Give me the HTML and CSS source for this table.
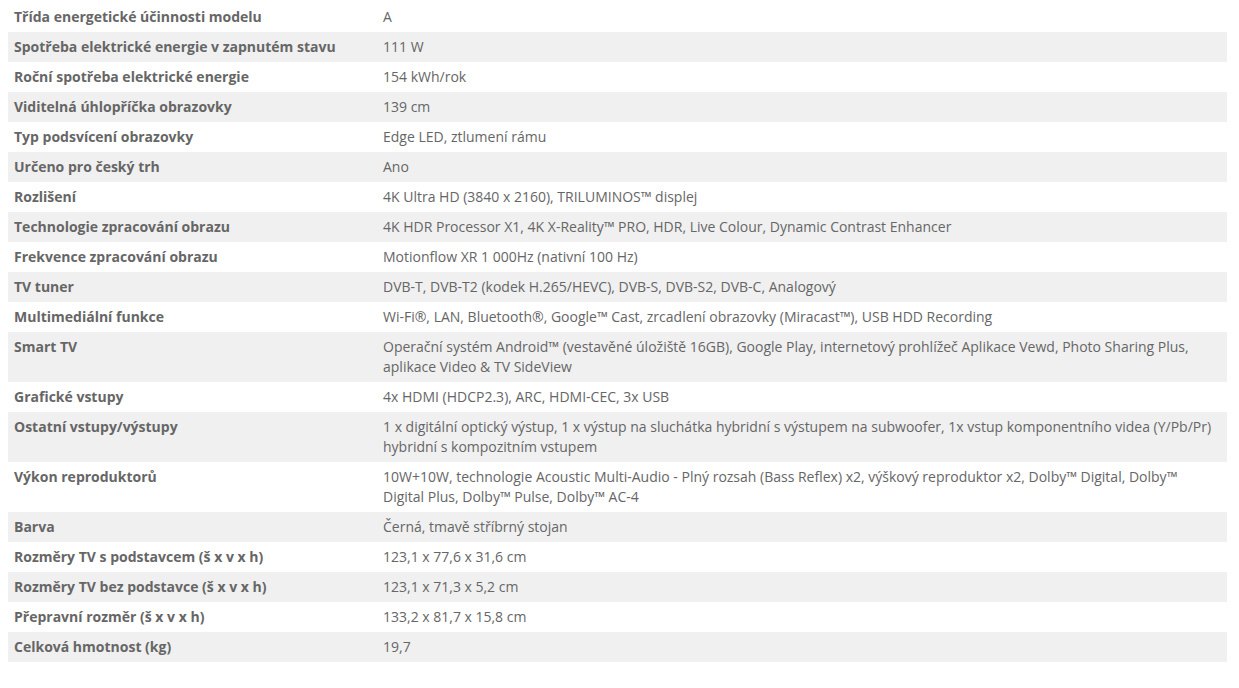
FILE: index.html
```html
<!DOCTYPE html>
<html lang="cs">
<head>
<meta charset="utf-8">
<title>Parametry</title>
<link rel="stylesheet" href="styles.css">
</head>
<body>
<table class="specs">
<tbody>
<tr><th>Třída energetické účinnosti modelu</th><td>A</td></tr>
<tr><th>Spotřeba elektrické energie v zapnutém stavu</th><td>111 W</td></tr>
<tr><th>Roční spotřeba elektrické energie</th><td>154 kWh/rok</td></tr>
<tr><th>Viditelná úhlopříčka obrazovky</th><td>139 cm</td></tr>
<tr><th>Typ podsvícení obrazovky</th><td>Edge LED, ztlumení rámu</td></tr>
<tr><th>Určeno pro český trh</th><td>Ano</td></tr>
<tr><th>Rozlišení</th><td>4K Ultra HD (3840 x 2160), TRILUMINOS™ displej</td></tr>
<tr><th>Technologie zpracování obrazu</th><td>4K HDR Processor X1, 4K X-Reality™ PRO, HDR, Live Colour, Dynamic Contrast Enhancer</td></tr>
<tr><th>Frekvence zpracování obrazu</th><td>Motionflow XR 1 000Hz (nativní 100 Hz)</td></tr>
<tr><th>TV tuner</th><td>DVB-T, DVB-T2 (kodek H.265/HEVC), DVB-S, DVB-S2, DVB-C, Analogový</td></tr>
<tr><th>Multimediální funkce</th><td>Wi-Fi®, LAN, Bluetooth®, Google™ Cast, zrcadlení obrazovky (Miracast™), USB HDD Recording</td></tr>
<tr><th>Smart TV</th><td>Operační systém Android™ (vestavěné úložiště 16GB), Google Play, internetový prohlížeč Aplikace Vewd, Photo Sharing Plus, aplikace Video &amp; TV SideView</td></tr>
<tr><th>Grafické vstupy</th><td>4x HDMI (HDCP2.3), ARC, HDMI-CEC, 3x USB</td></tr>
<tr><th>Ostatní vstupy/výstupy</th><td>1 x digitální optický výstup, 1 x výstup na sluchátka hybridní s výstupem na subwoofer, 1x vstup komponentního videa (Y/Pb/Pr) hybridní s kompozitním vstupem</td></tr>
<tr><th>Výkon reproduktorů</th><td>10W+10W, technologie Acoustic Multi-Audio - Plný rozsah (Bass Reflex) x2, výškový reproduktor x2, Dolby™ Digital, Dolby™ Digital Plus, Dolby™ Pulse, Dolby™ AC-4</td></tr>
<tr><th>Barva</th><td>Černá, tmavě stříbrný stojan</td></tr>
<tr><th>Rozměry TV s podstavcem (š x v x h)</th><td>123,1 x 77,6 x 31,6 cm</td></tr>
<tr><th>Rozměry TV bez podstavce (š x v x h)</th><td>123,1 x 71,3 x 5,2 cm</td></tr>
<tr><th>Přepravní rozměr (š x v x h)</th><td>133,2 x 81,7 x 15,8 cm</td></tr>
<tr><th>Celková hmotnost (kg)</th><td>19,7</td></tr>
</tbody>
</table>
</body>
</html>
```

FILE: styles.css
```css
html, body {
  background: #ffffff;
}
body {
  margin: 2px 12px 0 8px;
  font-family: "Open Sans", "Liberation Sans", sans-serif;
  font-size: 14px;
  line-height: 20px;
  color: #666666;
}
.specs {
  width: 1219px;
  border-collapse: collapse;
  border-spacing: 0;
  table-layout: fixed;
}
.specs tr:nth-child(even) {
  background: #f0f0f0;
}
.specs th,
.specs td {
  padding: 5px 6px;
  vertical-align: top;
  text-align: left;
}
.specs th {
  width: 357px;
  font-weight: 700;
}
.specs td {
  font-weight: 400;
}
```
